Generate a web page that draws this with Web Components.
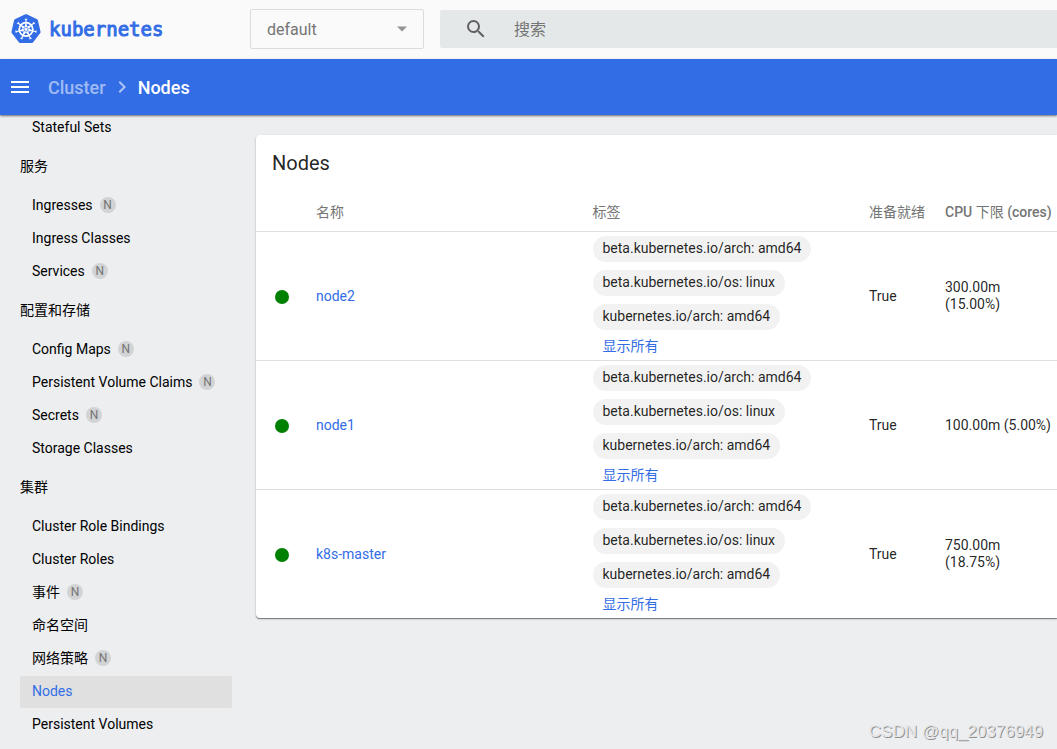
<!DOCTYPE html>
<html lang="zh-CN">
<head>
<meta charset="utf-8">
<meta name="viewport" content="width=device-width, initial-scale=1">
<title>Kubernetes Dashboard</title>
<style>
  html, body { margin: 0; height: 100%; }
  body {
    --primary: #326de6;
    --line: #dddfe0;
    background: #edeef0;
    color: rgba(0, 0, 0, .87);
    font: 14px/17px Roboto, "Noto Sans CJK SC", sans-serif;
  }
</style>
</head>
<body>
<kd-app></kd-app>

<script>
const define = (name, html, setup) => {
  const template = document.createElement('template');
  template.innerHTML = html;
  customElements.define(name, class extends HTMLElement {
    constructor() {
      super();
      this.attachShadow({ mode: 'open' }).append(template.content.cloneNode(true));
    }
    connectedCallback() { if (setup) setup.call(this, this.shadowRoot); }
  });
};

/* Logo: heptagon with a seven-spoke helm */
define('kd-logo', `
  <style>
    :host { display: block; }
    a { display: flex; align-items: center; gap: 8px; color: var(--primary); text-decoration: none;
        font: 19px/24px "DejaVu Sans Mono", monospace; -webkit-text-stroke: 1px var(--primary); }
    svg { display: block; }
  </style>
  <a href="#/workloads">
    <svg width="30" height="30" viewBox="0 0 30 30" aria-hidden="true">
      <path d="M15 1.8 25.4 6.800 28 18 20.9 27.4H9.1L2 18 4.600 6.800Z" fill="#326de6" stroke="#326de6" stroke-width="3.2" stroke-linejoin="round"/>
      <g class="helm" fill="none" stroke="#fff" transform="translate(15 15.4)">
        <circle r="6.8" stroke-width="1.8"/>
        <circle r="1.4" fill="#fff" stroke="none"/>
      </g>
    </svg>
    <span>kubernetes</span>
  </a>`, function (root) {
  const helm = root.querySelector('.helm');
  for (let i = 0; i < 7; i++) {
    const spoke = document.createElementNS('http://www.w3.org/2000/svg', 'path');
    spoke.setAttribute('d', 'M0-1.6V-10.6M-1.2-10.2H1.2M-.9-2.6 0-5.6 .9-2.6');
    spoke.setAttribute('stroke-width', '1.1');
    spoke.setAttribute('transform', `rotate(${i * 360 / 7})`);
    helm.append(spoke);
  }
});

define('kd-namespace', `
  <style>
    :host { display: grid; width: 174px; height: 40px; align-items: center; }
    select, svg { grid-area: 1 / 1; }
    select { appearance: none; box-sizing: border-box; width: 100%; height: 40px; margin: 0; padding: 0 16px;
      border: 1px solid #dcdcdc; border-radius: 2px; background: #fafafa; color: #757575; font: inherit; font-size: 16px; }
    svg { justify-self: end; margin-right: 16px; pointer-events: none; }
  </style>
  <select aria-label="Namespace"><option>default</option></select>
  <svg width="12" height="6" viewBox="0 0 12 6" aria-hidden="true"><path d="M1 .5h10L6 5.5z" fill="#949494"/></svg>`);

define('kd-search', `
  <style>
    :host { display: block; flex: 1; }
    form { display: flex; align-items: center; height: 38px; padding-left: 24px; border-radius: 2px 0 0 2px; background: #e4e8e8; }
    svg { flex: none; }
    input { flex: 1; min-width: 0; height: 38px; margin-left: 26px; padding: 0; border: 0; outline: 0; background: none;
      font: inherit; font-size: 16px; color: #333; }
    input::placeholder { color: #757575; opacity: 1; }
  </style>
  <form role="search">
    <svg width="24" height="24" viewBox="0 0 24 24" aria-hidden="true"><path fill="#616161" d="M15.5 14h-.79l-.28-.27A6.471 6.471 0 0 0 16 9.5 6.5 6.5 0 1 0 9.5 16c1.61 0 3.09-.59 4.23-1.57l.27.28v.79l5 4.99L20.49 19l-4.99-5zm-6 0C7.01 14 5 11.99 5 9.5S7.01 5 9.5 5 14 7.01 14 9.5 11.99 14 9.5 14z"/></svg>
    <input type="text" placeholder="搜索" aria-label="搜索">
  </form>`);

define('kd-topbar', `
  <style>
    :host { display: flex; align-items: center; box-sizing: border-box; height: 59px; padding-bottom: 1px; background: #fafafa; }
    kd-logo { flex: none; width: 239px; padding-left: 11px; }
    kd-search { margin-left: 16px; }
  </style>
  <kd-logo></kd-logo><kd-namespace></kd-namespace><kd-search></kd-search>`);

define('kd-actionbar', `
  <style>
    :host { display: flex; align-items: center; height: 56px; padding: 0 8px; background: var(--primary); color: #fff;
      position: relative; z-index: 1; box-shadow: 0 1px 2px rgba(0, 0, 0, .55); }
    button { display: block; margin: 0 16px 0 0; padding: 0; border: 0; background: none; color: inherit; }
    svg { display: block; }
    nav { display: flex; align-items: center; gap: 4px; font-size: 18px; line-height: 26px; font-weight: 500; }
    a, span { padding-top: 2px; }
    a { color: rgba(255, 255, 255, .55); text-decoration: none; }
  </style>
  <button aria-label="Menu"><svg width="24" height="24" viewBox="0 0 24 24"><path fill="currentColor" d="M3 18h18v-2H3v2zm0-5h18v-2H3v2zm0-7v2h18V6H3z"/></svg></button>
  <nav aria-label="Breadcrumb">
    <a href="#/cluster">Cluster</a>
    <svg width="24" height="24" viewBox="0 0 24 24" aria-hidden="true"><path fill="#fff" fill-opacity=".6" d="M10 6 8.590 7.410 13.170 12l-4.580 4.590L10 18l6-6z"/></svg>
    <span aria-current="page">Nodes</span>
  </nav>`);

define('kd-nav-group', `
  <style>
    :host { display: block; }
    h2 { margin: 0; font-size: 14px; line-height: 45px; font-weight: 400; color: #000; }
  </style>
  <h2></h2><slot></slot>`, function (root) {
  root.querySelector('h2').textContent = this.getAttribute('label');
});

define('kd-nav-item', `
  <style>
    :host { display: block; padding-top: 1px; }
    a { display: flex; align-items: center; gap: 7px; box-sizing: border-box; height: 32px; padding: 0 12px 2px; border-radius: 2px;
      color: #000; text-decoration: none; }
    :host([selected]) a { background: #e0e0e0; color: var(--primary); }
    .badge { display: none; width: 16px; height: 16px; border-radius: 50%; background: #d2d3d4; color: #757575;
      font-size: 12px; line-height: 16px; text-align: center; }
    :host([namespaced]) .badge { display: block; }
  </style>
  <a href="#"><slot></slot></a>`, function (root) {
  const link = root.querySelector('a');
  if (this.hasAttribute('selected')) link.setAttribute('aria-current', 'page');
  if (this.hasAttribute('namespaced')) {
    const badge = document.createElement('span');
    badge.className = 'badge';
    badge.textContent = 'N';
    link.append(badge);
  }
});

define('kd-sidebar', `
  <style>
    :host { display: block; box-sizing: border-box; flex: none; width: 252px; padding: 0 20px; margin-top: -4px; }
  </style>
  <nav aria-label="Main">
    <kd-nav-item>Stateful Sets</kd-nav-item>
    <kd-nav-group label="服务">
      <kd-nav-item namespaced>Ingresses</kd-nav-item>
      <kd-nav-item>Ingress Classes</kd-nav-item>
      <kd-nav-item namespaced>Services</kd-nav-item>
    </kd-nav-group>
    <kd-nav-group label="配置和存储">
      <kd-nav-item namespaced>Config Maps</kd-nav-item>
      <kd-nav-item namespaced>Persistent Volume Claims</kd-nav-item>
      <kd-nav-item namespaced>Secrets</kd-nav-item>
      <kd-nav-item>Storage Classes</kd-nav-item>
    </kd-nav-group>
    <kd-nav-group label="集群">
      <kd-nav-item>Cluster Role Bindings</kd-nav-item>
      <kd-nav-item>Cluster Roles</kd-nav-item>
      <kd-nav-item namespaced>事件</kd-nav-item>
      <kd-nav-item>命名空间</kd-nav-item>
      <kd-nav-item namespaced>网络策略</kd-nav-item>
      <kd-nav-item selected>Nodes</kd-nav-item>
      <kd-nav-item>Persistent Volumes</kd-nav-item>
    </kd-nav-group>
  </nav>`);

define('kd-chips', `
  <style>
    :host { display: block; padding-top: 2px; }
    ul { display: flex; flex-direction: column; align-items: flex-start; gap: 8px; margin: 0; padding: 0; list-style: none; }
    li { box-sizing: border-box; height: 26px; padding: 0 10px; border-radius: 13px; background: #f2f2f2; line-height: 24px; white-space: nowrap; }
    a { display: block; width: max-content; margin: 4px 10px 0; line-height: 24px; color: var(--primary); text-decoration: none; }
  </style>
  <ul>
    <li>beta.kubernetes.io/arch: amd64</li>
    <li>beta.kubernetes.io/os: linux</li>
    <li>kubernetes.io/arch: amd64</li>
  </ul>
  <a href="#">显示所有</a>`);

define('kd-status', `
  <style>
    :host { display: block; width: 14px; height: 14px; border-radius: 50%; background: #008000; }
  </style>`);

define('kd-node-list', `
  <style>
    :host { display: block; border-radius: 4px 0 0 4px; background: #fff;
      box-shadow: 0 1px 1px rgba(0, 0, 0, .45), 0 1px 3px rgba(0, 0, 0, .14); }
    h1 { margin: 0; padding-left: 16px; font-size: 20px; line-height: 56px; font-weight: 400; }
    table { width: 100%; table-layout: fixed; border-collapse: separate; border-spacing: 0; }
    .c-status { width: 60px; } .c-ready { width: 76px; } .c-cpu { width: 112px; }
    th { box-sizing: border-box; height: 41px; padding: 2px 0 0; border-bottom: 1px solid var(--line); color: #757575; font-weight: 500; text-align: left; white-space: nowrap; }
    th:lang(zh), th span { font-weight: 400; }
    td { box-sizing: border-box; height: 129px; padding: 0; border-bottom: 1px solid var(--line); vertical-align: middle; }
    tr:last-child td { height: 128px; border-bottom: 0; }
    th:last-child, td:last-child { padding-right: 4px; }
    td a { color: var(--primary); text-decoration: none; }
    kd-status { margin: 2px 0 0 19px; }
  </style>
  <h1>Nodes</h1>
  <table>
    <colgroup><col class="c-status"><col><col><col class="c-ready"><col class="c-cpu"></colgroup>
    <thead><tr><th></th><th lang="zh">名称</th><th lang="zh">标签</th><th lang="zh">准备就绪</th><th lang="en">CPU <span>下限</span> (cores)</th></tr></thead>
    <tbody>
      <tr><td><kd-status></kd-status></td><td><a href="#">node2</a></td><td><kd-chips></kd-chips></td><td>True</td><td>300.00m (15.00%)</td></tr>
      <tr><td><kd-status></kd-status></td><td><a href="#">node1</a></td><td><kd-chips></kd-chips></td><td>True</td><td>100.00m (5.00%)</td></tr>
      <tr><td><kd-status></kd-status></td><td><a href="#">k8s-master</a></td><td><kd-chips></kd-chips></td><td>True</td><td>750.00m (18.75%)</td></tr>
    </tbody>
  </table>`);

define('kd-app', `
  <style>
    :host { display: block; position: relative; min-height: 100%; }
    .body { display: flex; align-items: flex-start; }
    main { flex: 1; min-width: 0; padding: 20px 0 0 4px; }
    .watermark { position: absolute; right: 14px; bottom: 7px; color: #e6e6e6; font: 17px/20px "Liberation Sans", sans-serif;
      text-shadow: 1px 1px 0 #909090; }
  </style>
  <kd-topbar></kd-topbar>
  <kd-actionbar></kd-actionbar>
  <div class="body">
    <kd-sidebar></kd-sidebar>
    <main><kd-node-list></kd-node-list></main>
  </div>
  <div class="watermark">CSDN @qq_20376949</div>`);
</script>
</body>
</html>
